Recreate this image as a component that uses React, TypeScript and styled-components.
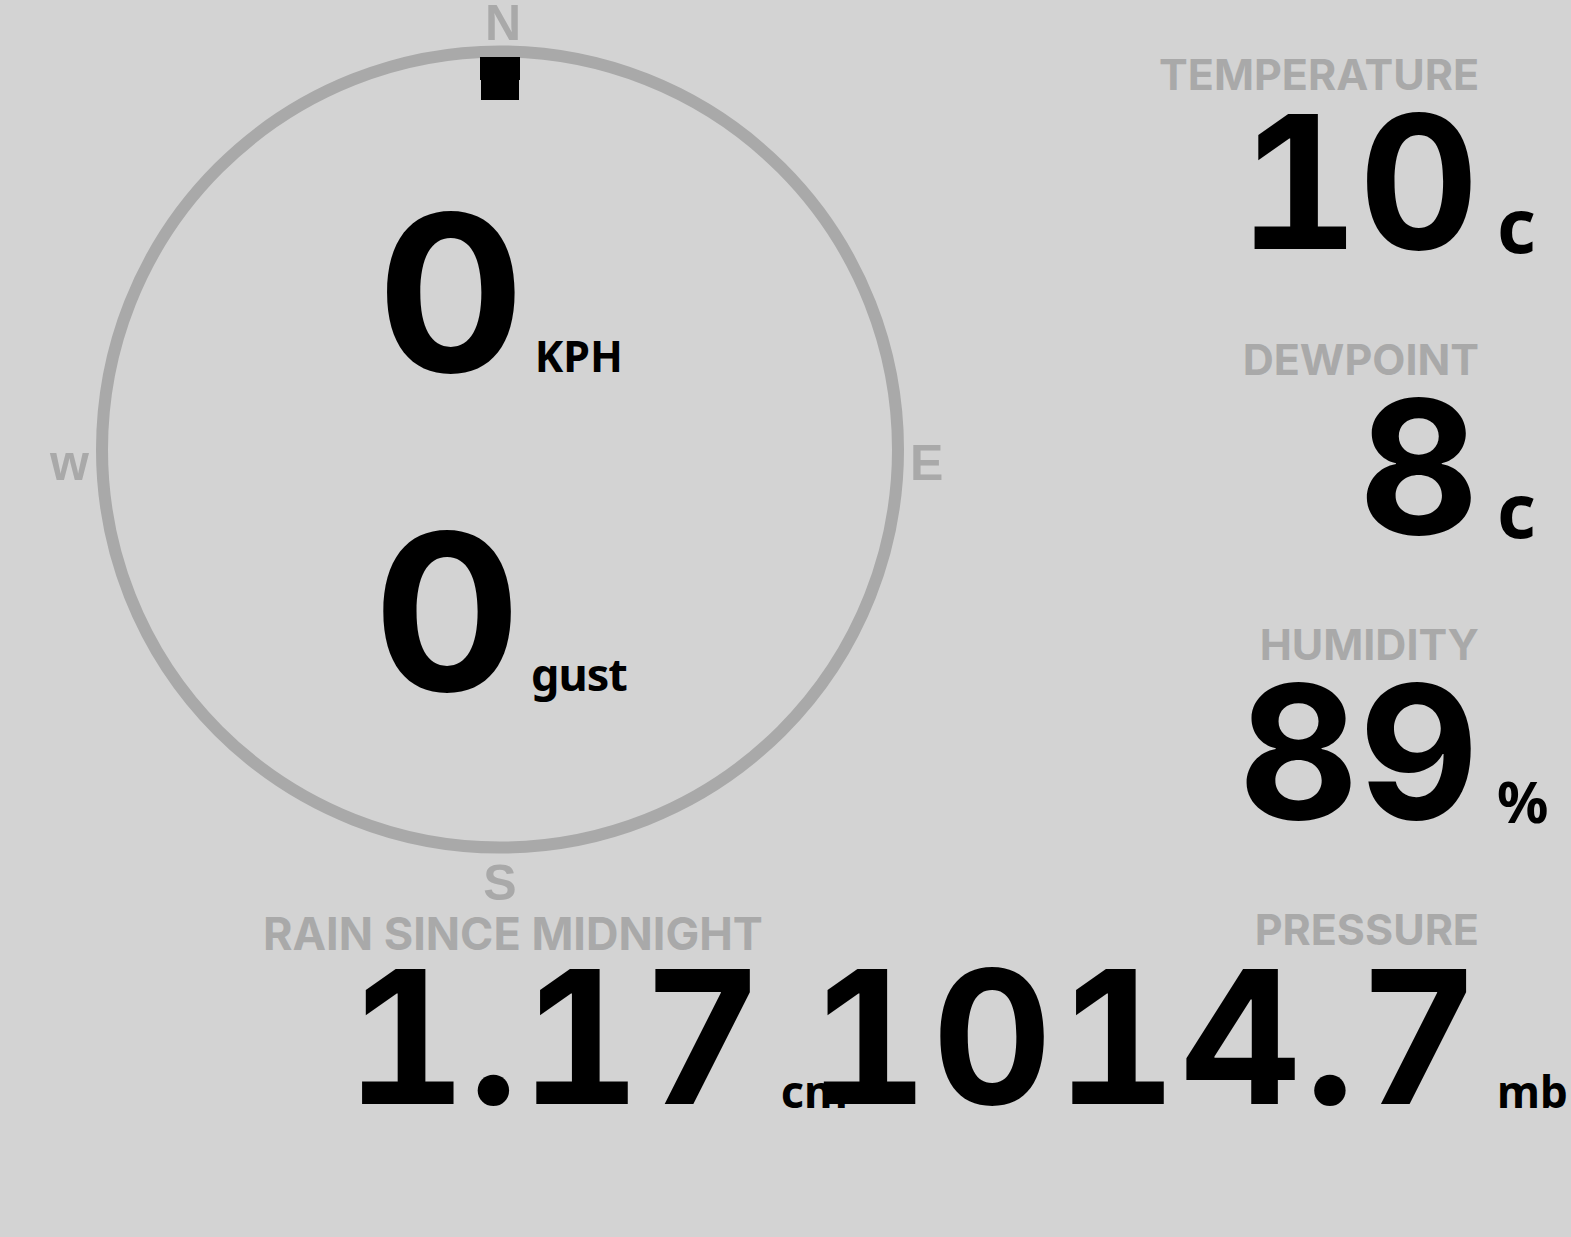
import React from "react";
import styled, { createGlobalStyle } from "styled-components";

const GlobalStyle = createGlobalStyle`
  html, body {
    margin: 0;
    padding: 0;
    background: #d3d3d3;
  }
  body {
    font-family: Inter, "Noto Sans", sans-serif;
    color: #000;
  }
`;

const Page = styled.main`
  display: grid;
  grid-template-columns: 1000px 1fr;
  grid-template-rows: 907px auto;
  min-height: 100vh;
  box-sizing: border-box;
`;

const Compass = styled.section`
  position: relative;
  display: flex;
  flex-direction: column;
  align-items: center;
  padding-top: 193px;
  gap: 119px;
  box-sizing: border-box;
`;

const Dial = styled.svg`
  position: absolute;
  inset: 0;
  width: 100%;
  height: 100%;
  overflow: visible;
`;

const SpeedRow = styled.div`
  position: relative;
  display: flex;
  align-items: baseline;
  gap: 10px;
  height: 200px;
`;

const SpeedValue = styled.span`
  font-family: Inter, sans-serif;
  font-weight: 700;
  font-size: 219px;
  line-height: 200px;
`;

const SpeedUnit = styled.span<{ $size: number; $tracking?: number }>`
  font-family: "Noto Sans", sans-serif;
  font-weight: 700;
  font-size: ${(p) => p.$size}px;
  letter-spacing: ${(p) => p.$tracking ?? 0}px;
  line-height: 1;
`;

const Readings = styled.section`
  display: flex;
  flex-direction: column;
  align-items: flex-end;
  padding-top: 52px;
  gap: 75px;
`;

const BottomRow = styled.section`
  grid-column: 1 / -1;
  display: flex;
  justify-content: flex-end;
  align-items: flex-start;
`;

const Reading = styled.div<{ $unitWidth: number }>`
  display: grid;
  grid-template-columns: auto ${(p) => p.$unitWidth}px;
  align-items: baseline;
`;

const Label = styled.div<{ $size: number; $drop: number }>`
  grid-column: 1;
  grid-row: 1;
  justify-self: end;
  margin: ${(p) => p.$drop}px 0 ${(p) => -p.$drop}px;
  font-family: Inter, sans-serif;
  font-weight: 700;
  font-size: ${(p) => p.$size}px;
  line-height: 44px;
  color: #a9a9a9;
  white-space: nowrap;
`;

const Value = styled.div<{ $tracking: number }>`
  grid-column: 1;
  grid-row: 2;
  justify-self: end;
  margin-top: 6px;
  margin-right: ${(p) => -p.$tracking}px;
  font-family: Inter, sans-serif;
  font-weight: 700;
  font-size: 186px;
  line-height: 160px;
  letter-spacing: ${(p) => p.$tracking}px;
  font-variant-numeric: tabular-nums;
  white-space: nowrap;
`;

const Unit = styled.div<{ $size: number }>`
  position: relative;
  z-index: 1;
  grid-column: 2;
  grid-row: 2;
  padding-left: 18px;
  font-family: "Noto Sans", sans-serif;
  font-weight: 700;
  font-size: ${(p) => p.$size}px;
  line-height: 1;
  white-space: nowrap;
  transform: translateY(4px);
`;

type ReadingProps = {
  label: string;
  value: string;
  unit: string;
  unitSize: number;
  unitWidth?: number;
  labelSize?: number;
  labelDrop?: number;
  tracking?: number;
};

function ReadingBlock({
  label,
  value,
  unit,
  unitSize,
  unitWidth = 92,
  labelSize = 43,
  labelDrop = 0,
  tracking = 0,
}: ReadingProps) {
  return (
    <Reading $unitWidth={unitWidth}>
      <Label $size={labelSize} $drop={labelDrop}>{label}</Label>
      <Value $tracking={tracking}>{value}</Value>
      <Unit $size={unitSize}>{unit}</Unit>
    </Reading>
  );
}

const GREY = "#a9a9a9";

function CompassDial() {
  return (
    <Dial viewBox="0 0 1000 907">
      <circle cx="500" cy="449.5" r="398" fill="none" stroke={GREY} strokeWidth="12" />
      <polygon points="480,57 520,57 520,80 519,80 519,100 481,100 481,80 480,80" fill="#000" />
      <g fontFamily='"Liberation Sans", Arial, sans-serif' fontWeight="700" fontSize="50" fill={GREY}>
        <text x="503" y="40" textAnchor="middle">N</text>
        <text x="910" y="480">E</text>
        <text x="50" y="480">w</text>
        <text x="500" y="900" textAnchor="middle">S</text>
      </g>
    </Dial>
  );
}

export default function App() {
  return (
    <>
      <GlobalStyle />
      <Page>
        <Compass>
          <CompassDial />
          <SpeedRow>
            <SpeedValue>0</SpeedValue>
            <SpeedUnit $size={43}>KPH</SpeedUnit>
          </SpeedRow>
          <SpeedRow>
            <SpeedValue>0</SpeedValue>
            <SpeedUnit $size={45} $tracking={-1}>gust</SpeedUnit>
          </SpeedRow>
        </Compass>
        <Readings>
          <ReadingBlock label="TEMPERATURE" value="10" unit="c" unitSize={75} />
          <ReadingBlock label="DEWPOINT" value="8" unit="c" unitSize={75} />
          <ReadingBlock label="HUMIDITY" value="89" unit="%" unitSize={57} />
        </Readings>
        <BottomRow>
          <ReadingBlock
            label="RAIN SINCE MIDNIGHT"
            value="1.17"
            unit="cm"
            unitSize={45}
            unitWidth={45}
            labelSize={45}
            labelDrop={5}
            tracking={2}
          />
          <ReadingBlock label="PRESSURE" value="1014.7" unit="mb" unitSize={44} tracking={4} />
        </BottomRow>
      </Page>
    </>
  );
}
